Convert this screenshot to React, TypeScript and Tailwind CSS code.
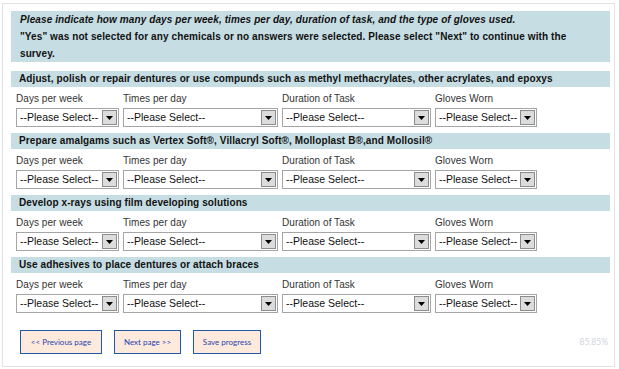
import React from "react";

const sections = [
  "Adjust, polish or repair dentures or use compunds such as methyl methacrylates, other acrylates, and epoxys",
  "Prepare amalgams such as Vertex Soft\u00ae, Villacryl Soft\u00ae, Molloplast B\u00ae,and Mollosil\u00ae",
  "Develop x-rays using film developing solutions",
  "Use adhesives to place dentures or attach braces",
];

const cols = [
  { label: "Days per week", w: "w-[103px]" },
  { label: "Times per day", w: "w-[155px]" },
  { label: "Duration of Task", w: "w-[149px]" },
  { label: "Gloves Worn", w: "w-[102px]" },
];

function FakeSelect({ w }: { w: string }) {
  return (
    <div className={`${w} h-[19px] border border-[#a5a5a5] bg-white flex items-center justify-between pl-[3px] pr-[1px]`}>
      <span className="text-[10.5px] text-[#111] leading-none" style={{ fontFamily: "'Liberation Sans', Arial, sans-serif" }}>
        --Please Select--
      </span>
      <div className="w-[15px] h-[15px] border border-[#8c8c8c] bg-[#dcdcdc] flex items-center justify-center">
        <svg width="7" height="4" viewBox="0 0 7 4">
          <polygon points="0,0 7,0 3.5,4" fill="#000" />
        </svg>
      </div>
    </div>
  );
}

export default function App() {
  return (
    <div className="w-[619px] h-[369px] bg-white pt-[3px] pl-[2px]" style={{ fontFamily: "'Liberation Sans', Arial, sans-serif" }}>
      <div className="w-[613px] h-[364px] border border-[#e2e2e2] pt-[7px] pl-[8px] pr-[4px] flex flex-col">
        <div className="bg-[#c6dde3] h-[51px] px-[9px] text-[10px] tracking-[0.1px] leading-[17px] font-bold text-[#111]">
          <div className="italic">Please indicate how many days per week, times per day, duration of task, and the type of gloves used.</div>
          <div>"Yes" was not selected for any chemicals or no answers were selected. Please select "Next" to continue with the survey.</div>
        </div>
        <div className="mt-[9px] flex flex-col">
          {sections.map((s) => (
            <div key={s} className="mb-[6px]">
              <div className="bg-[#c6dde3] h-[16px] pl-[8px] text-[10px] tracking-[0.1px] leading-[16px] font-bold text-[#111] whitespace-nowrap">
                {s}
              </div>
              <div className="mt-[4px] pl-[5px] flex gap-[4px]">
                {cols.map((c) => (
                  <div key={c.label} className="flex flex-col">
                    <div className="h-[17px] text-[10px] tracking-[0.05px] leading-[16px] text-[#333]">{c.label}</div>
                    <FakeSelect w={c.w} />
                  </div>
                ))}
              </div>
            </div>
          ))}
        </div>
        <div className="mt-[11px] flex items-center pl-[9px] pr-[2px]">
          <div className="flex gap-[12px]">
            {[
              { t: "<< Previous page", w: "w-[82px]" },
              { t: "Next page >>", w: "w-[67px]" },
              { t: "Save progress", w: "w-[68px]" },
            ].map((b) => (
              <div
                key={b.t}
                className={`${b.w} h-[24px] border border-[#1f5aa6] bg-[#fdeadc] flex items-center justify-center text-[8px] text-[#2a3fb0]`}
                style={{ fontFamily: "Lato, 'Open Sans', sans-serif" }}
              >
                {b.t}
              </div>
            ))}
          </div>
          <div className="ml-auto text-[8.5px] text-[#cfd4dc]" style={{ fontFamily: "Lato, sans-serif" }}>85.85%</div>
        </div>
      </div>
    </div>
  );
}
